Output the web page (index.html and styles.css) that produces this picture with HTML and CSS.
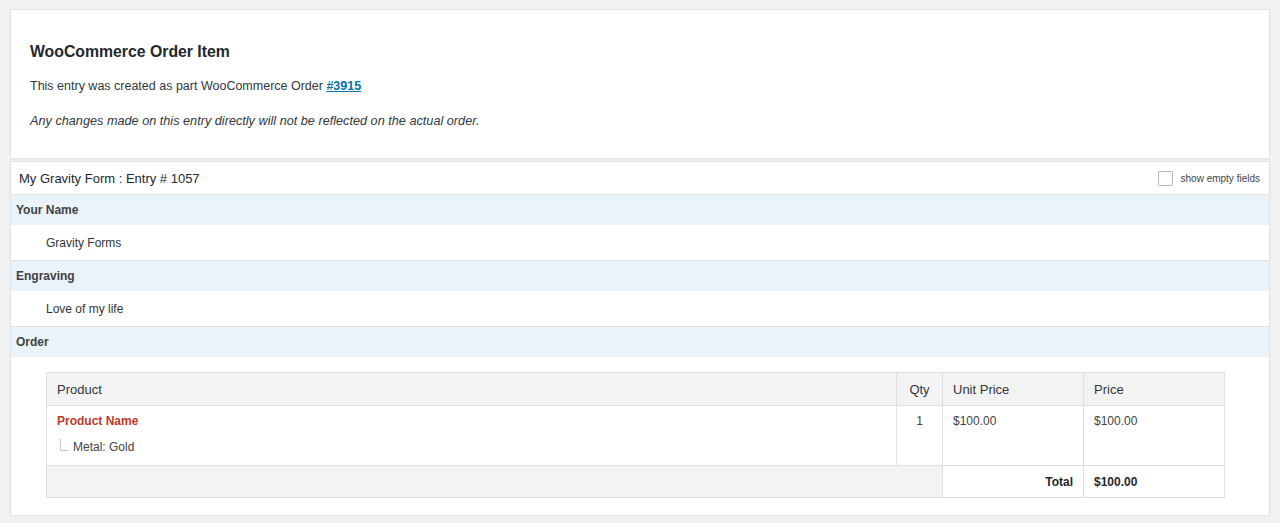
FILE: index.html
```html
<!DOCTYPE html>
<html>
<head>
<meta charset="utf-8">
<link rel="stylesheet" href="styles.css">
</head>
<body>
<div class="page">
  <div class="box notice">
    <h2 class="notice-title">WooCommerce Order Item</h2>
    <p class="notice-text">This entry was created as part WooCommerce Order <a class="order-link" href="#">#3915</a></p>
    <p class="notice-text notice-italic">Any changes made on this entry directly will not be reflected on the actual order.</p>
  </div>
  <div class="box entry">
    <div class="entry-head">
      <span class="entry-title">My Gravity Form : Entry # 1057</span>
      <label class="empty-toggle"><span class="checkbox"></span><span>show empty fields</span></label>
    </div>
    <div class="field-label">Your Name</div>
    <div class="field-value">Gravity Forms</div>
    <div class="field-label">Engraving</div>
    <div class="field-value">Love of my life</div>
    <div class="field-label">Order</div>
    <div class="field-order">
      <table class="order-table">
        <colgroup>
          <col class="c-product"><col class="c-qty"><col class="c-unit"><col class="c-price">
        </colgroup>
        <thead>
          <tr>
            <th>Product</th>
            <th class="center">Qty</th>
            <th>Unit Price</th>
            <th>Price</th>
          </tr>
        </thead>
        <tbody>
          <tr class="item-row">
            <td>
              <div class="product-name">Product Name</div>
              <div class="option"><span class="tree"></span>Metal: Gold</div>
            </td>
            <td class="center">1</td>
            <td>$100.00</td>
            <td>$100.00</td>
          </tr>
        </tbody>
        <tfoot>
          <tr>
            <td class="foot-empty" colspan="2"></td>
            <td class="total-label">Total</td>
            <td class="total-value">$100.00</td>
          </tr>
        </tfoot>
      </table>
    </div>
  </div>
</div>
</body>
</html>
```
FILE: styles.css
```css
html, body {
  margin: 0;
  padding: 0;
  background: #f1f1f1;
  font-family: "Liberation Sans", Arial, sans-serif;
  color: #23282d;
}
.page {
  padding: 9px 10px 0 10px;
}
.box {
  background: #fff;
  border: 1px solid #e2e4e7;
  box-shadow: 0 1px 1px rgba(0,0,0,0.04);
}
.notice {
  padding: 32px 19px 27px 19px;
}
.notice-title {
  margin: 0;
  font-size: 15.8px;
  line-height: 20px;
  font-weight: 700;
  color: #23282d;
}
.notice-text {
  margin: 14px 0 0 0;
  font-size: 12.5px;
  line-height: 20px;
  color: #32373c;
}
.notice-italic {
  margin-top: 15px;
  font-style: italic;
  font-size: 12.7px;
}
.order-link {
  color: #0073aa;
  font-weight: 700;
  text-decoration: underline;
}
.entry {
  margin-top: 2px;
}
.entry-head {
  display: flex;
  align-items: center;
  justify-content: space-between;
  height: 32px;
  padding: 0 9px 0 8px;
  border-bottom: 1px solid #e5e5e5;
}
.entry-title {
  font-size: 13px;
  color: #23282d;
}
.empty-toggle {
  display: flex;
  align-items: center;
  gap: 8px;
  font-size: 10px;
  color: #444;
}
.checkbox {
  width: 13px;
  height: 13px;
  border: 1px solid #b4b9be;
  border-radius: 1px;
  background: #fff;
}
.field-label {
  background: #eaf2fa;
  height: 30px;
  line-height: 31px;
  padding-left: 5px;
  font-size: 12px;
  font-weight: 700;
  color: #424242;
}
.field-value {
  height: 35px;
  line-height: 36px;
  padding-left: 35px;
  font-size: 12px;
  color: #333;
  border-bottom: 1px solid #dfdfdf;
}
.field-order {
  padding: 15px 44px 17px 35px;
}
.order-table {
  width: 100%;
  border-collapse: collapse;
  border: 1px solid #dfdfdf;
  font-size: 12px;
  color: #444;
}
.c-qty { width: 46px; }
.c-unit { width: 141px; }
.c-price { width: 141px; }
.order-table th {
  background: #f3f3f3;
  font-weight: 400;
  font-size: 13px;
  color: #32373c;
  text-align: left;
  height: 32px;
  padding: 0 10px;
  border: 1px solid #dfdfdf;
}
.order-table th.center, .order-table td.center {
  text-align: center;
}
.item-row td {
  vertical-align: top;
  height: 60px;
  padding: 8px 10px 0 10px;
  box-sizing: border-box;
  border: 1px solid #dfdfdf;
  line-height: 14px;
}
.product-name {
  color: #c0392b;
  font-weight: 700;
}
.option {
  display: flex;
  align-items: flex-end;
  margin-top: 11px;
  color: #444;
}
.tree {
  width: 8px;
  height: 11px;
  margin: 0 4px 3px 3px;
  border-left: 1px solid #c8c8c8;
  border-bottom: 1px solid #c8c8c8;
}
.order-table tfoot td {
  height: 31px;
  border: 1px solid #dfdfdf;
  padding: 0 10px;
  font-weight: 700;
  color: #23282d;
}
.foot-empty {
  background: #f3f3f3;
}
.total-label {
  text-align: right;
}
.total-value {
  text-align: left;
}
```
